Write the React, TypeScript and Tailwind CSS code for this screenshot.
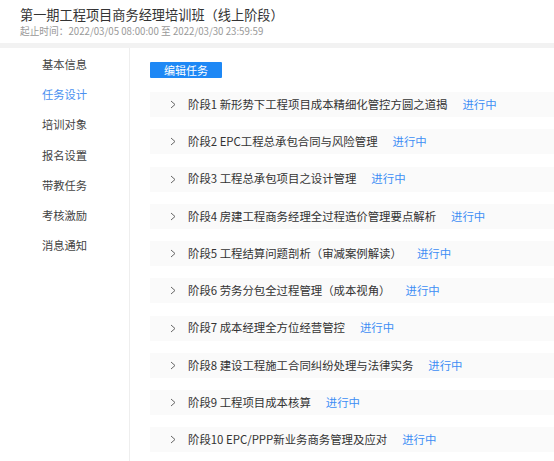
const menu = ["基本信息", "任务设计", "培训对象", "报名设置", "带教任务", "考核激励", "消息通知"];

const stages = [
  "阶段1 新形势下工程项目成本精细化管控方圆之道揭",
  "阶段2 EPC工程总承包合同与风险管理",
  "阶段3 工程总承包项目之设计管理",
  "阶段4 房建工程商务经理全过程造价管理要点解析",
  "阶段5 工程结算问题剖析（审减案例解读）",
  "阶段6 劳务分包全过程管理（成本视角）",
  "阶段7 成本经理全方位经营管控",
  "阶段8 建设工程施工合同纠纷处理与法律实务",
  "阶段9 工程项目成本核算",
  "阶段10 EPC/PPP新业务商务管理及应对",
];

function Chevron() {
  return (
    <svg width="6" height="9" viewBox="0 0 6 9" className="shrink-0">
      <path d="M1 1 L5 4.5 L1 8" fill="none" stroke="#666" strokeWidth="1" />
    </svg>
  );
}

export default function App() {
  return (
    <div
      className="h-[461px] w-[554px] overflow-hidden bg-white"
      style={{ fontFamily: '"Noto Sans CJK SC", "Noto Sans", sans-serif' }}
    >
      <header className="flex h-[43px] flex-col justify-center pl-[20px]">
        <div className="text-[13.2px] leading-[17px] text-[#333]">第一期工程项目商务经理培训班（线上阶段）</div>
        <div className="mt-[2px] text-[9.7px] leading-[12px] text-[#999]">
          起止时间：2022/03/05 08:00:00 至 2022/03/30 23:59:59
        </div>
      </header>
      <div className="h-[5px] bg-[#f2f2f2]" />

      <div className="flex h-[413px]">
        <aside className="w-[130px] shrink-0 border-r border-[#eeeeee] pt-[1px]">
          {menu.map((m, i) => (
            <div
              key={m}
              className={`h-[30.2px] text-center text-[11.3px] leading-[30px] ${
                i === 1 ? "text-[#4a90f0]" : "text-[#444]"
              }`}
            >
              {m}
            </div>
          ))}
        </aside>

        <main className="flex-1 pl-[20px] pt-[14px]">
          <button className="block h-[16px] w-[72px] rounded-[1px] bg-[#1e88f5] text-[11px] leading-[16px] text-white">
            编辑任务
          </button>
          <div className="mt-[14px] flex flex-col gap-[12.25px]">
            {stages.map((s) => (
              <div key={s} className="flex h-[25px] items-center bg-[#fafafa] pl-[20px]">
                <Chevron />
                <span className="ml-[12px] text-[11.4px] text-[#333]">{s}</span>
                <span className="ml-[15px] text-[11.4px] text-[#3d8ef5]">进行中</span>
              </div>
            ))}
          </div>
        </main>
      </div>
    </div>
  );
}
